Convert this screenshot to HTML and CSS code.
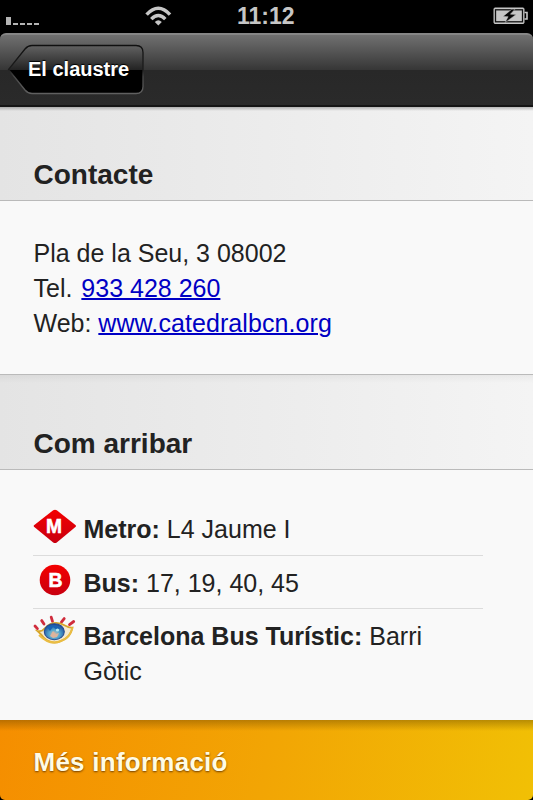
FILE: index.html
```html
<!DOCTYPE html>
<html lang="ca">
<head>
<meta charset="utf-8">
<title>El claustre</title>
<link rel="stylesheet" href="styles.css">
</head>
<body>
<div class="screen">
  <div class="status">
    <div class="signal"><i class="full"></i><i></i><i></i><i></i><i></i></div>
    <svg class="wifi" width="28" height="20" viewBox="0 0 28 20">
      <g fill="none" stroke="#c6c6c6" stroke-width="3.5">
        <path d="M1.6 8.6Q13.3 -4 25 8.6"/>
        <path d="M6.3 13.1Q13.3 5.9 20.3 13.1"/>
      </g>
      <path d="M9.8 15.9Q13.3 12.8 16.8 15.9L13.3 19.6Z" fill="#c6c6c6"/>
    </svg>
    <span class="clock">11:12</span>
    <svg class="battery" width="36" height="18" viewBox="0 0 36 18">
      <rect x="1" y="1" width="30" height="15.5" rx="1" fill="#c6c6c6" stroke="#c6c6c6" stroke-width="1"/>
      <rect x="2.5" y="2.8" width="27" height="12" fill="none" stroke="#111" stroke-width="1.3"/>
      <path d="M31.5 5.5H34V12H31.5" fill="none" stroke="#c6c6c6" stroke-width="1.6"/>
      <path d="M18.8 2.2L10 9.4L15.1 9.7L12 15.7L23.2 7.4L17.4 7.2L22 2.2Z" fill="#080808" stroke="#c6c6c6" stroke-width=".5"/>
    </svg>
  </div>
  <header class="navbar">
    <a class="back">
      <svg class="back-shape" width="138" height="52" viewBox="0 0 138 52">
        <defs>
          <linearGradient id="gloss" x1="0" y1="0" x2="0" y2="1">
            <stop offset="0" stop-color="#626262"/>
            <stop offset=".5" stop-color="#242424"/>
            <stop offset=".51" stop-color="#000"/>
            <stop offset="1" stop-color="#000"/>
          </linearGradient>
          <linearGradient id="edge" x1="0" y1="0" x2="0" y2="1">
            <stop offset="0" stop-color="#101010"/>
            <stop offset=".5" stop-color="#1c1c1c"/>
            <stop offset=".65" stop-color="#484848"/>
            <stop offset="1" stop-color="#606060"/>
          </linearGradient>
        </defs>
        <path d="M25 1.5H129Q136 1.5 136 8.5V42.5Q136 49.5 129 49.5H25Q21 49.5 18 46L1.5 25.5L18 5Q21 1.5 25 1.5Z" fill="url(#gloss)" stroke="url(#edge)" stroke-width="1.3"/>
      </svg>
      <span class="back-label">El claustre</span>
    </a>
  </header>
  <h2 class="heading first">Contacte</h2>
  <section class="panel contact">
    <p>Pla de la Seu, 3 08002</p>
    <p>Tel. <a class="link phone" href="tel:933428260">933 428 260</a></p>
    <p>Web: <a class="link web" href="http://www.catedralbcn.org">www.catedralbcn.org</a></p>
  </section>
  <h2 class="heading">Com arribar</h2>
  <section class="panel arrive">
    <ul class="routes">
      <li>
        <svg class="icon" width="44" height="36" viewBox="0 0 44 36">
          <defs><linearGradient id="red" x1="0" y1="0" x2="0" y2="1"><stop offset="0" stop-color="#f40000"/><stop offset="1" stop-color="#c80010"/></linearGradient></defs>
          <path d="M20.2 1.2Q22 .2 23.8 1.2L42.7 16.3Q43.3 17 42.7 17.8L23.8 33.4Q22 34.6 20.2 33.4L1 17.8Q.2 17 1 16.3Z" fill="url(#red)"/>
          <text class="badge" x="21" y="24" text-anchor="middle" textLength="16" lengthAdjust="spacingAndGlyphs">M</text>
        </svg>
        <div><b>Metro:</b> L4 Jaume I</div>
      </li>
      <li>
        <svg class="icon" width="44" height="36" viewBox="0 0 44 36">
          <circle cx="22" cy="17" r="15.3" fill="url(#red)"/>
          <text class="badge" x="22.6" y="23.7" text-anchor="middle" textLength="14" lengthAdjust="spacingAndGlyphs">B</text>
        </svg>
        <div><b>Bus:</b> 17, 19, 40, 45</div>
      </li>
      <li>
        <svg class="icon eye" width="44" height="36" viewBox="0 0 44 36">
          <defs><radialGradient id="iris" cx=".5" cy=".65" r=".65"><stop offset="0" stop-color="#d0bda8"/><stop offset=".4" stop-color="#55a9d0"/><stop offset="1" stop-color="#153f91"/></radialGradient></defs>
          <g stroke="#d02c3c" stroke-width="2.8" stroke-linecap="round">
            <path d="M2 11L4.4 13.6M8.7 5.6L11 9M18.2 2.2L19.5 6.3M31.2 3.6L28.4 7.2M40.7 6.5L36.5 9.6"/>
          </g>
          <path d="M4.5 16Q9 17 12 13Q21 4 33 11Q36 13 39.5 12.5Q37.5 22 30 25Q20 31 11 23Q9 20 4.5 16Z" fill="#f5ead0" stroke="#d7a62b" stroke-width="1.7"/>
          <path d="M6 20Q17 31 28 26Q37 23 39.5 12.5" fill="none" stroke="#eabd43" stroke-width="2"/>
          <ellipse cx="21.3" cy="16.7" rx="10" ry="8" fill="url(#iris)" stroke="#294d92" stroke-width="1.1"/>
          <path d="M14 12Q20 8 28 13L24 15L20 12L17 16Z" fill="#1864b5"/>
          <path d="M17 21L20 16L23 19L26 18L24 22L20 23Z" fill="#ddb49d"/>
          <circle cx="24.5" cy="15" r="1.6" fill="#b9ecf5"/>
        </svg>
        <div><b>Barcelona Bus Turístic:</b> Barri<br>Gòtic</div>
      </li>
    </ul>
  </section>
  <footer class="more">Més informació</footer>
</div>
</body>
</html>
```
FILE: styles.css
```css
* { box-sizing: border-box; }
body {
  margin: 0;
  background: #000;
  font-family: "Liberation Sans", Arial, sans-serif;
  color: #222;
}
.screen {
  width: 533px;
  height: 800px;
  display: flex;
  flex-direction: column;
  overflow: hidden;
  border-radius: 0 0 5px 5px;
}
.status {
  height: 33px;
  flex: none;
  display: grid;
  grid-template-columns: 145px 92px 256px 40px;
  background: #000;
  color: #c6c6c6;
}
.signal {
  display: flex;
  align-items: flex-end;
  gap: 2px;
  height: 25px;
  padding-left: 6px;
}
.signal i { width: 5px; height: 2px; background: #b4b4b4; }
.signal .full { height: 8px; }
.wifi { margin-top: 6px; }
.clock {
  font-size: 23px;
  font-weight: bold;
  line-height: 33px;
}
.battery { margin-top: 7px; }
.navbar {
  height: 74px;
  flex: none;
  padding: 11px 0 0 7px;
  border-top: 2px solid #868686;
  border-bottom: 2px solid #151515;
  border-radius: 6px 6px 0 0;
  background: linear-gradient(#707070 0, #363636 35px, #282828 35px, #2a2a2a 100%);
}
.back {
  position: relative;
  display: block;
  width: 138px;
  height: 52px;
  margin-top: -2px;
}
.back-shape { display: block; }
.back-label {
  position: absolute;
  left: 21px;
  top: 14px;
  font-size: 20px;
  line-height: 23px;
  font-weight: bold;
  color: #fff;
  white-space: nowrap;
  text-shadow: 0 -1px 1px #000;
}
.heading {
  height: 95px;
  flex: none;
  margin: 0;
  padding: 52px 33.5px 0;
  border-bottom: 1px solid #bababa;
  background: linear-gradient(rgba(0, 0, 0, .045), transparent 8px), linear-gradient(to right, #e4e4e4, #f4f4f4);
  font-size: 28px;
  line-height: 34px;
  font-weight: bold;
}
.heading.first {
  height: 94px;
  padding-top: 51px;
  background: linear-gradient(rgba(0, 0, 0, .25), transparent 4px), linear-gradient(to right, #e4e4e4, #f4f4f4);
}
.panel {
  flex: none;
  background: #f9f9f9;
  font-size: 25px;
  line-height: 35px;
}
.contact {
  height: 174px;
  padding: 35px 33.5px 0;
  border-bottom: 1px solid #bababa;
}
.contact p { margin: 0; }
.link {
  color: #0000c4;
  text-decoration: underline;
  text-decoration-thickness: 1.5px;
}
.phone { margin-left: 2px; }
.web { letter-spacing: .08px; }
.arrive {
  height: 250px;
  padding: 35px 50px 0 33px;
}
.routes {
  list-style: none;
  margin: 0;
  padding: 0;
}
.routes li {
  display: grid;
  grid-template-columns: 44px 1fr;
  column-gap: 6.5px;
  padding: 10px 0 7px;
  height: 53px;
  border-bottom: 1px solid #dcdcdc;
}
.routes li:first-child {
  height: 51px;
  padding: 7px 0 8px;
}
.routes li:last-child {
  height: auto;
  border-bottom: 0;
}
.icon { margin-top: -3px; }
.eye { margin-top: -4px; }
.badge {
  font-size: 20px;
  font-weight: bold;
  fill: #fff;
  stroke: #fff;
  stroke-width: .6px;
}
.more {
  height: 80px;
  flex: none;
  padding: 25px 33.5px 0;
  background: linear-gradient(rgba(90, 60, 0, .38), transparent 11px), linear-gradient(100deg, #f58e00, #f2a504 50%, #f1c005);
  color: #fffbe4;
  font-size: 26px;
  letter-spacing: .25px;
  line-height: 35px;
  font-weight: bold;
  text-shadow: 0 1px 2px rgba(80, 40, 0, .8);
}
```
